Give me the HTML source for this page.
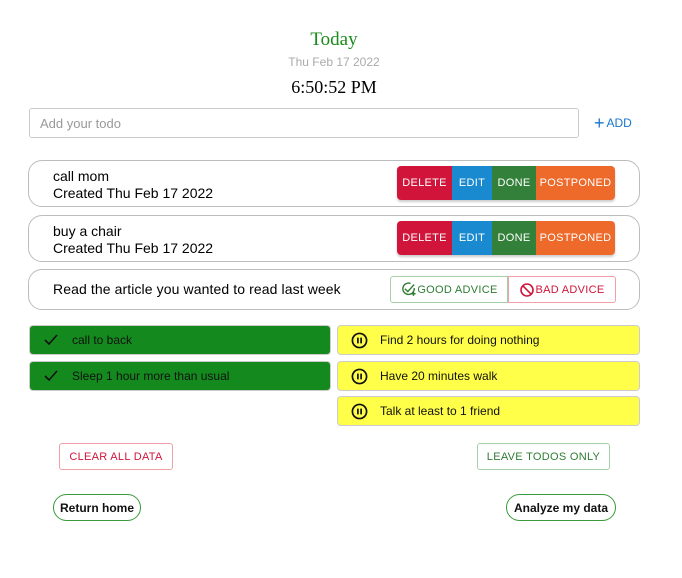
<!DOCTYPE html>
<html><head><style>
*{box-sizing:border-box;margin:0;padding:0}
body{width:682px;height:578px;background:#fff;font-family:"Liberation Sans",sans-serif;position:relative;overflow:hidden}
.a{position:absolute}
.c{text-align:center;left:0;width:668px}
.card{position:absolute;left:28px;width:612px;border:1px solid #bdbdbd;border-radius:14px;background:#fff}
.btns{position:absolute;display:flex;height:34px;border-radius:4px;overflow:hidden;box-shadow:0 2px 2px rgba(0,0,0,.2);left:397px}
.btns div{color:#fff;font-size:11px;display:flex;align-items:center;justify-content:center;letter-spacing:.3px}
.it{position:absolute;height:30px;border:1px solid #ccc;border-radius:4px;font-size:12px;display:flex;align-items:center;color:#111}
.g{left:29px;width:302px;background:#148a1e}
.y{left:337px;width:303px;background:#ffff4a}
.ob{position:absolute;height:27px;border-radius:3px;font-size:11px;display:flex;align-items:center;justify-content:center;letter-spacing:.3px}
.rb{position:absolute;height:27px;border:1px solid #3a9a3a;border-radius:14px;font-size:12px;font-weight:bold;display:flex;align-items:center;justify-content:center;color:#111}
</style></head><body>
<div class="a c" style="top:29px;font-family:'Liberation Serif',serif;font-size:19px;color:#1a8a1a">Today</div>
<div class="a c" style="top:55px;font-size:12px;color:#aaa">Thu Feb 17 2022</div>
<div class="a c" style="top:77px;font-family:'Liberation Serif',serif;font-size:18px;color:#000">6:50:52 PM</div>
<div class="a" style="left:29px;top:108px;width:550px;height:30px;border:1px solid #ccc;border-radius:3px"></div>
<div class="a" style="left:40px;top:116px;font-size:13px;color:#999">Add your todo</div>
<div class="a" style="left:594px;top:116px;font-size:12px;color:#1976d2;display:flex;align-items:center"><span style="font-size:18px;line-height:14px;margin-right:2px">+</span>ADD</div>

<div class="card" style="top:160px;height:47px"><div class="a" style="left:24px;top:7px;font-size:14px;line-height:17px">call mom<br>Created Thu Feb 17 2022</div></div>
<div class="btns" style="top:166px"><div style="width:55px;background:#d0143a">DELETE</div><div style="width:40px;background:#1a8ad0">EDIT</div><div style="width:44px;background:#33803a">DONE</div><div style="width:79px;background:#ee6a2a">POSTPONED</div></div>
<div class="card" style="top:215px;height:47px"><div class="a" style="left:24px;top:7px;font-size:14px;line-height:17px">buy a chair<br>Created Thu Feb 17 2022</div></div>
<div class="btns" style="top:221px"><div style="width:55px;background:#d0143a">DELETE</div><div style="width:40px;background:#1a8ad0">EDIT</div><div style="width:44px;background:#33803a">DONE</div><div style="width:79px;background:#ee6a2a">POSTPONED</div></div>
<div class="card" style="top:269px;height:41px"><div class="a" style="left:24px;top:11px;font-size:14px;letter-spacing:.1px">Read the article you wanted to read last week</div></div>
<div class="ob" style="left:390px;top:276px;width:118px;border:1px solid #a8d0a8;color:#2e7d32;border-radius:3px 0 0 3px"><svg width="17" height="17" viewBox="0 0 24 24" fill="none" stroke="#2e7d32" stroke-width="2"><path d="M20 10a8 8 0 1 1-5-6.5"/><path d="M7 11l4 4 9-10"/><path d="M19 15v6M16 18h6"/></svg>GOOD ADVICE</div>
<div class="ob" style="left:508px;top:276px;width:108px;border:1px solid #f0a0a8;color:#d0143a;border-radius:0 3px 3px 0"><svg width="16" height="16" viewBox="0 0 24 24" fill="none" stroke="#d0143a" stroke-width="2.4"><circle cx="12" cy="12" r="9"/><path d="M5.6 5.6l12.8 12.8"/></svg>BAD ADVICE</div>

<div class="it g" style="top:325px"><svg style="margin:0 14px 0 14px" width="14" height="12" viewBox="0 0 14 12" fill="none" stroke="#111" stroke-width="1.6"><path d="M1 6l4 4 8-9"/></svg>call to back</div>
<div class="it g" style="top:361px"><svg style="margin:0 14px 0 14px" width="14" height="12" viewBox="0 0 14 12" fill="none" stroke="#111" stroke-width="1.6"><path d="M1 6l4 4 8-9"/></svg>Sleep 1 hour more than usual</div>
<div class="it y" style="top:325px"><svg style="margin:0 12px 0 13px" width="17" height="17" viewBox="0 0 18 18" fill="none" stroke="#111" stroke-width="1.8"><circle cx="9" cy="9" r="7.5"/><path d="M7.3 6v6M10.7 6v6"/></svg>Find 2 hours for doing nothing</div>
<div class="it y" style="top:361px"><svg style="margin:0 12px 0 13px" width="17" height="17" viewBox="0 0 18 18" fill="none" stroke="#111" stroke-width="1.8"><circle cx="9" cy="9" r="7.5"/><path d="M7.3 6v6M10.7 6v6"/></svg>Have 20 minutes walk</div>
<div class="it y" style="top:396px"><svg style="margin:0 12px 0 13px" width="17" height="17" viewBox="0 0 18 18" fill="none" stroke="#111" stroke-width="1.8"><circle cx="9" cy="9" r="7.5"/><path d="M7.3 6v6M10.7 6v6"/></svg>Talk at least to 1 friend</div>

<div class="ob" style="left:59px;top:443px;width:114px;border:1px solid #f0a0a8;color:#d0143a">CLEAR ALL DATA</div>
<div class="ob" style="left:477px;top:443px;width:133px;border:1px solid #a8d0a8;color:#2e7d32">LEAVE TODOS ONLY</div>
<div class="rb" style="left:53px;top:494px;width:88px">Return home</div>
<div class="rb" style="left:506px;top:494px;width:110px">Analyze my data</div>
</body></html>
